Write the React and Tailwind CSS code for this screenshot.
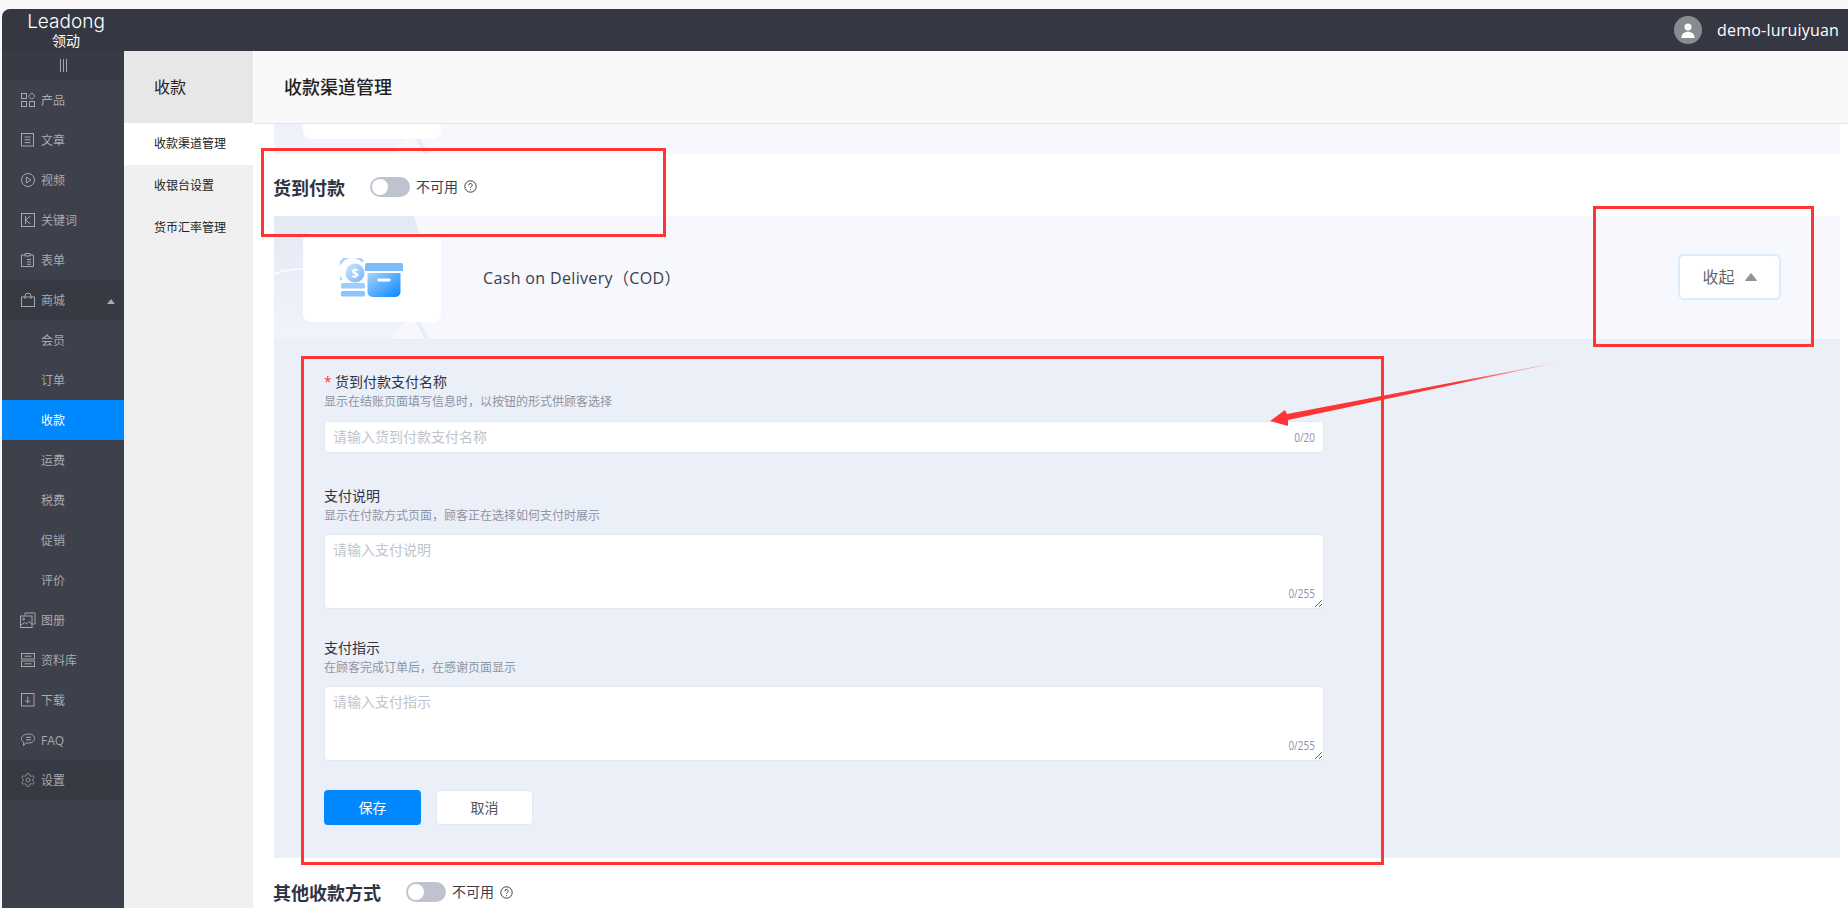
import { Settings } from "lucide-react";

const iconProps = {
  width: 16,
  height: 16,
  viewBox: "0 0 16 16",
  fill: "none",
  stroke: "#a6a8ae",
  strokeWidth: 1,
};

const icons = {
  product: (
    <svg {...iconProps}>
      <rect x="1.5" y="1.5" width="5" height="5" />
      <path d="M11.8 1 L15 4.2 L11.8 7.4 L8.6 4.2 Z" />
      <rect x="1.5" y="9.5" width="5" height="5" />
      <rect x="9.5" y="9.5" width="5" height="5" />
    </svg>
  ),
  article: (
    <svg {...iconProps}>
      <rect x="1.5" y="1.5" width="12" height="12.5" />
      <path d="M4.5 5h6M4.5 7.8h6M4.5 10.6h6" />
    </svg>
  ),
  video: (
    <svg {...iconProps}>
      <circle cx="8" cy="8" r="6.5" />
      <path d="M6.3 5 L11 8 L6.3 11 Z" />
    </svg>
  ),
  keyword: (
    <svg {...iconProps}>
      <rect x="1.5" y="1.5" width="13" height="13" />
      <path d="M5.5 4v8M10.5 4 L5.5 8.2 L10.5 12" />
    </svg>
  ),
  form: (
    <svg {...iconProps}>
      <path d="M5 3H1.5v11.5h12V3H10" />
      <path d="M5 4V1.5h5V4Z" />
      <path d="M7 7.5h4M7 10h4M7 12.3h4" />
    </svg>
  ),
  shop: (
    <svg {...iconProps}>
      <rect x="1.5" y="5" width="13" height="9.5" />
      <path d="M5 7V4a3 3 0 0 1 6 0v3" />
    </svg>
  ),
  album: (
    <svg {...iconProps}>
      <path d="M5 3.5V1h10v11h-2.5" />
      <rect x="0.5" y="4" width="11.5" height="11.5" />
      <circle cx="3.5" cy="7" r="1" />
      <path d="M1 13 L4.5 10.5 L6.5 12 L9 9.5 L12 12" />
    </svg>
  ),
  library: (
    <svg {...iconProps}>
      <rect x="1.5" y="1.5" width="13" height="5.5" />
      <rect x="1.5" y="9" width="13" height="5.5" />
      <path d="M4.5 4.2h7M4.5 11.8h7" />
    </svg>
  ),
  download: (
    <svg {...iconProps}>
      <rect x="1.5" y="1.5" width="12.5" height="12.5" />
      <path d="M7.8 4.5v6M5.3 8.3l2.5 2.4 2.5-2.4" />
    </svg>
  ),
  faq: (
    <svg {...iconProps}>
      <path d="M8.5 2c3.4 0 6 1.7 6 4.5S12 11 8.5 11H6.2L3.5 13.5l.3-3.2C2.2 9.5 1.5 8 1.5 6.500 1.500 3.700 5 2 8.500 2Z" />
      <path d="M6 5.300h5M6 7.800h5" />
    </svg>
  ),
  settings: <Settings size={16} strokeWidth={1.1} color="#a6a8ae" />,
};

const menu = [
  { label: "产品", icon: "product" },
  { label: "文章", icon: "article" },
  { label: "视频", icon: "video" },
  { label: "关键词", icon: "keyword" },
  { label: "表单", icon: "form" },
  { label: "商城", icon: "shop", open: true },
  { label: "会员" },
  { label: "订单" },
  { label: "收款", active: true },
  { label: "运费" },
  { label: "税费" },
  { label: "促销" },
  { label: "评价" },
  { label: "图册", icon: "album" },
  { label: "资料库", icon: "library" },
  { label: "下载", icon: "download" },
  { label: "FAQ", icon: "faq" },
  { label: "设置", icon: "settings", dark: true },
];

const subNav = ["收款渠道管理", "收银台设置", "货币汇率管理"];

const Toggle = () => (
  <span className="flex h-5 w-10 items-center rounded-full bg-[#bfc3cf] px-0.5">
    <span className="size-4 rounded-full bg-white" />
  </span>
);

const Help = () => (
  <svg width="13" height="13" viewBox="0 0 13 13" fill="none" stroke="#3a3d4d">
    <circle cx="6.500" cy="6.500" r="5.700" />
    <path d="M4.800 5.200a1.700 1.700 0 1 1 2.500 1.500c-.6.300-.8.600-.8 1.200" />
    <path d="M6.500 9.200v1" />
  </svg>
);

const SectionTitle = ({ title, className }) => (
  <div className={`-ml-px flex items-center ${className}`}>
    <h2 className="text-lg font-bold leading-none text-[#2f3345]">{title}</h2>
    <div className="ml-[25px] -translate-y-px">
      <Toggle />
    </div>
    <span className="ml-1.5 -translate-y-px text-sm leading-none text-[#3a3d4d]">不可用</span>
    <span className="ml-1.5 -translate-y-px">
      <Help />
    </span>
  </div>
);

const PanelArt = () => (
  <svg
    className="absolute left-0 top-0"
    width="170"
    height="123"
    viewBox="0 0 170 123"
  >
    <defs>
      <linearGradient id="panelShade" x1="0" y1="0" x2="0" y2="1">
        <stop offset="0" stopColor="#e4e9f5" />
        <stop offset="1" stopColor="#f1f4fb" />
      </linearGradient>
    </defs>
    <path d="M0 0H140L146 20V106H130L117 123H0Z" fill="url(#panelShade)" />
    <path d="M146 106L155 123H151L142 106Z" fill="#e8ecf7" />
    <path d="M0 58C10 54 20 53 30 53" stroke="#fafbfe" strokeWidth="2" fill="none" />
  </svg>
);

const CodIcon = () => (
  <svg width="63" height="39" viewBox="0 0 63 39">
    <defs>
      <linearGradient id="boxBody" x1="0" y1="0" x2="1" y2="1">
        <stop offset="0" stopColor="#a6d2fd" />
        <stop offset="1" stopColor="#0a88ff" />
      </linearGradient>
      <linearGradient id="coin" x1="0" y1="0" x2="1" y2="1">
        <stop offset="0" stopColor="#d3e8fe" />
        <stop offset="1" stopColor="#6db4fb" />
      </linearGradient>
    </defs>
    <path
      d="M1.500 22A13.500 13.500 0 0 1 23 3.500"
      stroke="#a9d2fd"
      strokeWidth="2.500"
      fill="none"
    />
    <circle cx="15" cy="15" r="9.500" fill="url(#coin)" />
    <text
      x="15"
      y="20"
      textAnchor="middle"
      fontSize="13"
      fontWeight="700"
      fill="#fff"
      fontFamily="Open Sans, sans-serif"
    >
      $
    </text>
    <rect x="1" y="25" width="24" height="5.500" rx="1.500" fill="#9dcdfc" />
    <rect x="1" y="33" width="24" height="5.500" rx="1.500" fill="#8cc4fb" />
    <path d="M25 7a2 2 0 0 1 2-2h34a2 2 0 0 1 2 2v6H25Z" fill="#7dbcfb" />
    <path d="M27.500 15h33v19a5 5 0 0 1-5 5h-23a5 5 0 0 1-5-5Z" fill="url(#boxBody)" />
    <rect x="37.500" y="20.500" width="13" height="3" rx="1" fill="#fff" />
  </svg>
);

const ChannelHead = ({ name, expanded }) => (
  <div className="relative h-[123px] w-full shrink-0 bg-[#f6f8fd]">
    <PanelArt />
    <div className="relative flex h-full items-start pl-[29px]">
      <div className="mt-[17px] flex h-[89px] w-[138px] items-center justify-center rounded-lg bg-white pr-0.5">
        {expanded && <CodIcon />}
      </div>
      {expanded && (
        <>
          <div className="ml-[42px] self-center text-base tracking-[0.35px] text-[#3a3d4d]">{name}</div>
          <button className="ml-auto mr-[59px] mt-[38px] flex h-[46px] w-[103px] items-center justify-center gap-2.5 rounded-md border-2 border-[#dcebfd] bg-white text-base text-[#666]">
            收起
            <svg width="12" height="8" viewBox="0 0 12 8">
              <path d="M6 0.500L11.500 7.500H0.500Z" fill="#909399" stroke="#909399" strokeLinejoin="round" />
            </svg>
          </button>
        </>
      )}
    </div>
  </div>
);

const FieldLabel = ({ label, hint, required }) => (
  <>
    <div className="flex h-5 items-center text-sm text-[#2f3345]">
      {required && <span className="mr-1 w-[7px] text-[#ff3b3b]">*</span>}
      {label}
    </div>
    <div className="mt-px h-[18px] text-xs leading-[18px] text-[#8e93a5]">{hint}</div>
  </>
);

const Count = ({ text, className }) => (
  <span className={`absolute right-[9px] origin-right scale-x-[0.83] text-xs leading-none text-[#8e93a5] ${className}`}>
    {text}
  </span>
);

const TextField = ({ placeholder, className }) => (
  <div className={`relative w-[1000px] ${className}`}>
    <textarea
      placeholder={placeholder}
      className="block h-[75px] w-full rounded-[4px] border border-[#e4e7ef] bg-white px-2 pb-1.5 pt-[5px] text-sm leading-5 outline-none placeholder:text-[#c0c4cc]"
    />
    <Count text="0/255" className="bottom-[9px]" />
  </div>
);

export default function App() {
  return (
    <div className="relative h-[908px] w-[1848px] overflow-hidden bg-[#f8f8f8] pl-0.5 pt-[9px] font-['Open_Sans','Noto_Sans_CJK_SC',sans-serif]">
      {/* top bar */}
      <header className="flex h-[42px] items-center rounded-tl-lg bg-[#353842] pr-[9px]">
        <div className="flex w-[122px] flex-col items-center gap-1 pl-1.5 text-white">
          <span className="font-['Inter',sans-serif] text-[19px] font-light leading-[17px]">Leadong</span>
          <span className="text-[14px] leading-[14px]">领动</span>
        </div>
        <div className="ml-auto flex size-7 items-center justify-center rounded-full bg-[#888b8f]">
          <svg width="14" height="15" viewBox="0 0 14 15" fill="#fff">
            <circle cx="7" cy="4" r="3.500" />
            <path d="M0.500 15C0.500 11 3 8.800 7 8.800S13.500 11 13.500 15Z" />
          </svg>
        </div>
        <span className="ml-[15px] text-base leading-none tracking-[0.2px] text-white">demo-luruiyuan</span>
      </header>

      <div className="flex h-[857px]">
        {/* left menu */}
        <aside className="w-[122px] shrink-0 bg-[#3e404b]">
          <div className="flex h-[29px] items-center justify-center gap-0.5 bg-[#383a45]">
            <span className="h-[13px] w-px bg-[#a3a5ad]" />
            <span className="h-[13px] w-px bg-[#a3a5ad]" />
            <span className="h-[13px] w-px bg-[#a3a5ad]" />
          </div>
          {menu.map((item) => (
            <div
              key={item.label}
              className={`relative flex h-10 items-center pl-[18px] text-xs ${
                item.active
                  ? "bg-[#0088ff] text-white"
                  : item.open || item.dark
                    ? "bg-[#373943] text-[#a8aab0]"
                    : "text-[#a8aab0]"
              }`}
            >
              <span className="flex w-4 justify-center">{icons[item.icon]}</span>
              <span className="ml-[5px] pt-px">{item.label}</span>
              {item.open && (
                <span className="absolute right-[9px] top-[19px] size-0 border-x-4 border-b-[5px] border-x-transparent border-b-[#a8aab0]" />
              )}
            </div>
          ))}
        </aside>

        {/* second level nav */}
        <nav className="w-[129px] shrink-0 bg-[#f0f0f0]">
          <div className="flex h-[72px] items-center bg-[#e8e6e6] pl-[30px] text-base text-[#222]">收款</div>
          {subNav.map((label, i) => (
            <div
              key={label}
              className={`flex h-[42px] items-center pl-[30px] text-xs text-[#222] ${i === 0 ? "bg-white" : ""}`}
            >
              {label}
            </div>
          ))}
        </nav>

        {/* content */}
        <main className="min-w-0 flex-1 overflow-hidden bg-white pl-0.5">
          <div className="-ml-px flex h-[73px] items-center border-b border-[#e5e5e5] bg-[#f8f8f8] pl-[30px] text-lg font-medium text-[#222]">
            收款渠道管理
          </div>
          <div className="pl-[19px] pr-2">
            <div className="flex h-[30px] flex-col justify-end overflow-hidden">
              <div className="-mb-0.5">
                <ChannelHead />
              </div>
            </div>
            <SectionTitle title="货到付款" className="h-[62px] pt-[5px]" />
            <ChannelHead name="Cash on Delivery（COD）" expanded />
            <div className="h-[519px] bg-[#ebf0f8] pl-[50px] pt-[33px]">
              <FieldLabel required label="货到付款支付名称" hint="显示在结账页面填写信息时，以按钮的形式供顾客选择" />
              <div className="relative mt-2.5 w-[1000px]">
                <input
                  placeholder="请输入货到付款支付名称"
                  className="block h-8 w-full rounded-[4px] border border-[#e4e7ef] bg-white px-2 pb-0.5 text-sm outline-none placeholder:text-[#c0c4cc]"
                />
                <Count text="0/20" className="bottom-[9px]" />
              </div>

              <div className="mt-[33px]">
                <FieldLabel label="支付说明" hint="显示在付款方式页面，顾客正在选择如何支付时展示" />
              </div>
              <TextField placeholder="请输入支付说明" className="mt-[9px]" />

              <div className="mt-[29px]">
                <FieldLabel label="支付指示" hint="在顾客完成订单后，在感谢页面显示" />
              </div>
              <TextField placeholder="请输入支付指示" className="mt-[9px]" />

              <div className="mt-[29px] flex gap-[15px]">
                <button className="h-[35px] w-[97px] rounded-[4px] bg-[#0088ff] text-sm text-white">保存</button>
                <button className="h-[35px] w-[97px] rounded-[4px] border border-[#e4e7ef] bg-white text-sm text-[#555]">取消</button>
              </div>
            </div>
            <SectionTitle title="其他收款方式" className="h-[70px]" />
          </div>
        </main>
      </div>

      {/* screenshot annotations drawn on top of the page */}
      <div className="absolute left-[261px] top-[148px] h-[89px] w-[405px] border-[3px] border-[#ff3535]" />
      <div className="absolute left-[1593px] top-[206px] h-[141px] w-[221px] border-[3px] border-[#ff3535]" />
      <div className="absolute left-[301px] top-[356px] h-[509px] w-[1083px] border-[3px] border-[#ff3535]" />
      <svg className="pointer-events-none absolute left-0 top-0" width="1848" height="908">
        <defs>
          <linearGradient id="arrowFade" gradientUnits="userSpaceOnUse" x1="1270" y1="421" x2="1560" y2="362">
            <stop offset="0" stopColor="#ff3535" />
            <stop offset="0.65" stopColor="#ff3535" />
            <stop offset="1" stopColor="#ff3535" stopOpacity="0.1" />
          </linearGradient>
        </defs>
        <path d="M1270 421L1285 410L1287 414L1560 362L1288 420L1288 426Z" fill="url(#arrowFade)" />
      </svg>
    </div>
  );
}
